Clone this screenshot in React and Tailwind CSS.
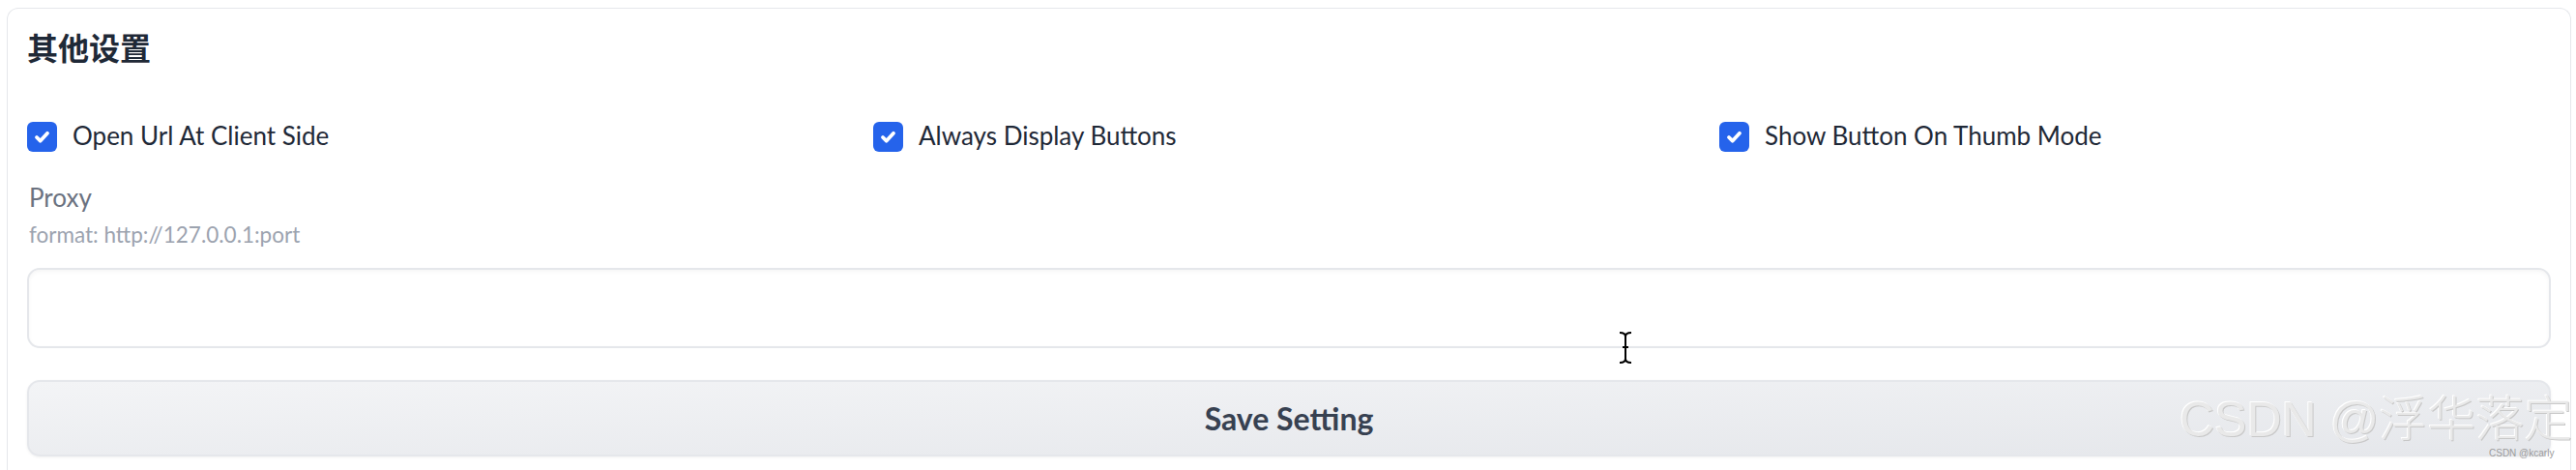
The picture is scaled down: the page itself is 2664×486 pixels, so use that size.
import React, { useState } from 'react';

const sans = { fontFamily: 'Lato, "Noto Sans CJK SC", sans-serif' };

const Check = ({ label, checked, onToggle }) => (
    <label className="flex items-center gap-[16px] cursor-pointer select-none" onClick={onToggle}>
        <span className={`flex items-center justify-center w-[31px] h-[31px] rounded-[6px] ${checked ? 'bg-[#2563eb]' : 'bg-white border border-[#d1d5db]'}`}>
            {checked && (
                <svg viewBox="0 0 16 16" className="w-[21px] h-[21px]" fill="none" stroke="white" strokeWidth="2.9" strokeLinecap="round" strokeLinejoin="round">
                    <path d="M3.8 8.4l2.8 2.8 5.6-6" />
                </svg>
            )}
        </span>
        <span className="text-[26px] leading-[28px] pb-[3px] text-[#1f2937]">{label}</span>
    </label>
);

const App = () => {
    const [opts, setOpts] = useState({ client: true, always: true, thumb: true });
    const [proxy, setProxy] = useState('');
    const toggle = (k) => setOpts(p => ({ ...p, [k]: !p[k] }));

    return (
        <div className="relative w-full h-[486px] bg-white overflow-hidden pt-[8px] pl-[7px] pr-[5px]" style={sans}>
            <div className="border border-[#e5e7eb] border-b-0 rounded-t-[12px] h-[500px] pt-[17px] px-[20px]">
                {/* Title */}
                <h2 className="text-[32px] leading-[44px] font-bold text-[#1f2937]" style={{ fontFamily: '"Noto Sans CJK SC", sans-serif' }}>
                    其他设置
                </h2>

                {/* Checkboxes */}
                <div className="grid grid-cols-3 gap-[15px] mt-[56px]">
                    <Check label="Open Url At Client Side" checked={opts.client} onToggle={() => toggle('client')} />
                    <Check label="Always Display Buttons" checked={opts.always} onToggle={() => toggle('always')} />
                    <Check label="Show Button On Thumb Mode" checked={opts.thumb} onToggle={() => toggle('thumb')} />
                </div>

                {/* Proxy */}
                <div className="mt-[32px] pl-[2px]">
                    <div className="text-[26px] leading-[30px] text-[#6b7280]">Proxy</div>
                    <div className="mt-[11px] text-[22.5px] leading-[26px] text-[#9ca3af]">format: http://127.0.0.1:port</div>
                </div>
                <input
                    value={proxy}
                    onChange={(e) => setProxy(e.target.value)}
                    className="mt-[21px] block w-full h-[83px] rounded-[13px] border-2 border-[#e5e7eb] bg-white px-[20px] text-[26px] text-[#1f2937] outline-none shadow-[inset_0_2px_4px_rgba(0,0,0,0.04)]"
                />

                <button className="mt-[33px] w-full h-[79px] rounded-[13px] border-2 border-[#e5e7eb] bg-gradient-to-br from-[#f3f4f6] to-[#e5e7eb] text-[32px] leading-[36px] font-bold text-[#374151] shadow-[0_1px_3px_rgba(0,0,0,0.06)]">
                    Save Setting
                </button>
            </div>

            {/* mouse cursor */}
            <svg className="absolute left-[1674px] top-[343px] w-[14px] h-[33px]" viewBox="0 0 14 33" fill="none" stroke="black" strokeWidth="2">
                <path d="M1 1q6 0 6 4v23q0 4 6 4M13 1q-6 0-6 4v23q0 4-6 4M4 16h6" />
            </svg>

            {/* watermark */}
            <div className="absolute left-[2254px] top-[404px] text-[50px] leading-[60px] text-[#e9e9e9] whitespace-nowrap [text-shadow:1px_1px_0_#c8c8c8,-1px_-1px_0_#ffffff]" style={{ fontFamily: '"Liberation Sans", "Noto Sans CJK SC", sans-serif', fontWeight: 300 }}>
                CSDN @浮华落定
            </div>
            <div className="absolute left-[2574px] top-[463px] text-[10px] leading-[12px] text-[#9a9a9a] whitespace-nowrap" style={{ fontFamily: '"Liberation Sans", sans-serif' }}>
                CSDN @kcarly
            </div>
        </div>
    );
};

export default App;
